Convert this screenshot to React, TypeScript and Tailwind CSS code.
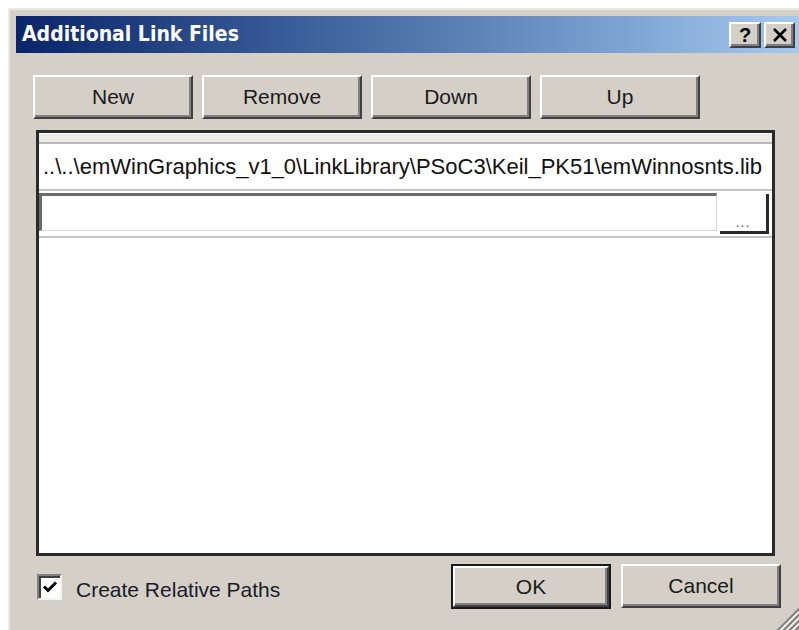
const raised =
  "border-t-2 border-l-2 border-t-white border-l-white border-r-2 border-b-2 border-r-[#404040] border-b-[#404040] shadow-[inset_-2px_-2px_0_#808080]";

const PushButton = ({ label, isDefault = false }: { label: string; isDefault?: boolean }) => {
  if (isDefault) {
    return (
      <div className="w-[160px] h-[45px] border-2 border-[#1a1a1a]">
        <div className={`w-full h-full bg-[#d4d0c8] flex items-center justify-center text-[21px] text-[#1a1a1a] ${raised}`}>
          {label}
        </div>
      </div>
    );
  }
  return (
    <div className={`w-[160px] h-[44px] bg-[#d4d0c8] flex items-center justify-center text-[21px] text-[#1a1a1a] ${raised}`}>
      {label}
    </div>
  );
};

const CaptionButton = ({ children, w }: { children: React.ReactNode; w: string }) => (
  <div className={`${w} h-[26px] bg-[#d4d0c8] flex items-center justify-center ${raised}`}>{children}</div>
);

const App = () => {
  return (
    <div className="w-[799px] h-[630px] bg-white overflow-hidden pl-[8px] pt-[8px]" style={{ fontFamily: '"Liberation Sans", Arial, sans-serif' }}>
      <div className="relative w-[799px] h-[640px] bg-[#d4d0c8] border-t-2 border-l-2 border-[#ebe9e4] p-[6px]">
        {/* caption bar */}
        <div className="h-[37px] flex items-center pl-[6px] pr-[6px] bg-gradient-to-r from-[#0a246a] to-[#a6caf0]">
          <span
            className="text-white font-bold text-[21px]"
            style={{ fontFamily: '"DejaVu Sans Condensed", "DejaVu Sans", sans-serif' }}
          >
            Additional Link Files
          </span>
          <div className="ml-auto flex gap-[3px]">
            <CaptionButton w="w-[32px]">
              <span className="text-[20px] font-bold text-black leading-none">?</span>
            </CaptionButton>
            <CaptionButton w="w-[31px]">
              <svg width="16" height="14" viewBox="0 0 16 14">
                <path d="M2 1 L14 13 M14 1 L2 13" stroke="#000" strokeWidth="2.6" />
              </svg>
            </CaptionButton>
          </div>
        </div>

        {/* toolbar buttons */}
        <div className="flex gap-[9px] ml-[17px] mt-[22px]">
          <PushButton label="New" />
          <PushButton label="Remove" />
          <PushButton label="Down" />
          <PushButton label="Up" />
        </div>

        {/* file list */}
        <div className="ml-[20px] mt-[11px] w-[739px] h-[426px] bg-white border-[3px] border-[#2a2a2a] flex flex-col">
          <div className="h-[11px] bg-[#eceae6] border-t border-white border-b-2 border-b-[#b8b8b8]" />
          <div className="h-[47px] flex items-center pl-[4px] border-b-2 border-[#c4c4c4] text-[22px] text-[#111] whitespace-nowrap">
            ..\..\emWinGraphics_v1_0\LinkLibrary\PSoC3\Keil_PK51\emWinnosnts.lib
          </div>
          <div className="h-[47px] flex items-start border-b-2 border-[#c4c4c4]">
            <div className="mt-[2px] w-[678px] h-[38px] bg-white border-t-[3px] border-l-[3px] border-[#6a6a6a] border-r border-b border-r-[#d8d6d0] border-b-[#d8d6d0]" />
            <div className="ml-[3px] mt-[3px] w-[49px] h-[40px] bg-white border-r-[3px] border-b-[3px] border-[#2a2a2a] flex items-end justify-center pb-[2px]">
              <span className="text-[14px] text-[#6a4a9a] leading-none tracking-[1px]">...</span>
            </div>
          </div>
        </div>

        {/* footer */}
        <div className="flex items-center w-[765px] mt-[8px] pl-[21px]">
          <div className="flex items-center">
            <div className="w-[25px] h-[26px] bg-white border-t-2 border-l-2 border-[#808080] border-r-2 border-b-2 border-r-[#f4f3f0] border-b-[#f4f3f0] shadow-[inset_2px_2px_0_#404040] flex items-center justify-center">
              <svg width="16" height="14" viewBox="0 0 16 14">
                <path d="M2 6.5 L6 10.5 L14 2.5" stroke="#000" strokeWidth="3" fill="none" />
              </svg>
            </div>
            <span className="ml-[14px] mt-[6px] text-[21px] text-[#1a1a2a]">Create Relative Paths</span>
          </div>
          <div className="ml-auto flex gap-[10px]">
            <PushButton label="OK" isDefault />
            <PushButton label="Cancel" />
          </div>
        </div>

        {/* size grip */}
        <svg className="absolute left-[766px] top-[592px]" width="26" height="30" viewBox="0 0 26 30">
          <path d="M26 4 L0 30 M26 10 L6 30 M26 16 L12 30 M26 22 L18 30" stroke="#808080" strokeWidth="2" />
          <path d="M26 6.5 L2.5 30 M26 12.5 L8.5 30 M26 18.5 L14.5 30" stroke="#ffffff" strokeWidth="1.2" />
        </svg>
      </div>
    </div>
  );
};

export default App;
